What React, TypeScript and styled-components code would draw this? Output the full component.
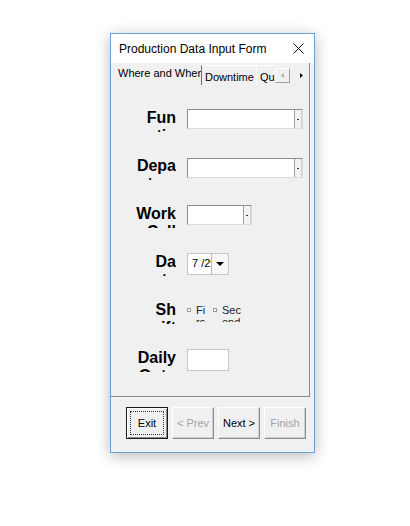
import React from "react";
import styled, { createGlobalStyle } from "styled-components";

const GlobalStyle = createGlobalStyle`
  html, body {
    margin: 0;
    padding: 0;
    background: #ffffff;
  }
  body {
    font-family: "Liberation Sans", Arial, sans-serif;
  }
`;

// Страница: окно формы сдвинуто как на скриншоте
const Screen = styled.div`
  width: 410px;
  height: 526px;
  padding: 33px 0 0 110px;
  box-sizing: border-box;
`;

const Window = styled.div`
  width: 205px;
  height: 420px;
  box-sizing: border-box;
  border: 1px solid #6f9fd2;
  background: #f0f0f0;
  box-shadow: 0 3px 14px rgba(0, 0, 0, 0.28);
  display: flex;
  flex-direction: column;
`;

const TitleBar = styled.div`
  height: 29px;
  flex: none;
  background: #ffffff;
  display: flex;
  align-items: center;
  justify-content: space-between;
  padding: 0 10px 0 8px;
  font-size: 12px;
  color: #000;
`;

const CloseIcon = () => (
  <svg width="11" height="11" viewBox="0 0 11 11">
    <path d="M0.5 0.5 L10.5 10.5 M10.5 0.5 L0.5 10.5" stroke="#111" strokeWidth="1" fill="none" />
  </svg>
);

const Body = styled.div`
  flex: 1;
  display: flex;
  flex-direction: column;
  padding-right: 4px;
`;

// MultiPage с вкладками
const MultiPage = styled.div`
  height: 334px;
  display: flex;
  flex-direction: column;
  border-right: 1px solid #8a8a8a;
  border-bottom: 1px solid #8a8a8a;
  box-sizing: border-box;
`;

const TabStrip = styled.div`
  height: 22px;
  flex: none;
  display: flex;
  align-items: flex-start;
`;

const Tabs = styled.div`
  width: 164px;
  height: 22px;
  display: flex;
  overflow: hidden;
  flex: none;
`;

const Tab = styled.div<{ $active?: boolean; $width: number }>`
  flex: none;
  width: ${({ $width }) => $width}px;
  height: ${({ $active }) => ($active ? 22 : 20)}px;
  margin-top: ${({ $active }) => ($active ? 0 : 2)}px;
  box-sizing: border-box;
  padding: ${({ $active }) => ($active ? "2px 0 0 6px" : "4px 0 0 3px")};
  font-size: 11px;
  line-height: 14px;
  white-space: nowrap;
  overflow: ${({ $active }) => ($active ? "visible" : "hidden")};
  position: relative;
  z-index: ${({ $active }) => ($active ? 0 : 1)};
  background: #f0f0f0;
  color: #000;
  border-left: 1px solid ${({ $active }) => ($active ? "transparent" : "#ffffff")};
  border-top: 1px solid ${({ $active }) => ($active ? "transparent" : "#ffffff")};
  &:first-child + & {
    border-left: 1px solid #6d6d6d;
  }
`;

const SpinButton = styled.div<{ $bordered?: boolean }>`
  width: 15px;
  height: 15px;
  margin-top: 5px;
  box-sizing: border-box;
  display: flex;
  align-items: center;
  justify-content: center;
  border: 1px solid;
  border-color: ${({ $bordered }) =>
    $bordered ? "#ffffff #a0a0a0 #a0a0a0 #ffffff" : "transparent"};
`;

const SpinGap = styled.div`
  width: 4px;
  flex: none;
`;

const Arrow = ({ dir, color }: { dir: "left" | "right"; color: string }) => (
  <svg width="3" height="5" viewBox="0 0 3 5">
    {dir === "left" ? (
      <path d="M3 0 L0 2.5 L3 5 Z" fill={color} />
    ) : (
      <path d="M0 0 L3 2.5 L0 5 Z" fill={color} />
    )}
  </svg>
);

const Panel = styled.div`
  flex: 1;
  padding-top: 24px;
  display: flex;
  flex-direction: column;
`;

const Row = styled.div`
  height: 48px;
  flex: none;
  display: flex;
  align-items: flex-start;
`;

const LabelCell = styled.div`
  width: 65px;
  flex: none;
  display: flex;
  justify-content: flex-end;
`;

const Label = styled.div<{ $width: number }>`
  width: ${({ $width }) => $width}px;
  height: 23px;
  overflow: hidden;
  text-align: right;
  word-break: break-all;
  font-size: 16px;
  line-height: 18px;
  font-weight: bold;
  color: #000;
`;

const FieldCell = styled.div<{ $offset?: number }>`
  margin-left: 11px;
  margin-top: ${({ $offset }) => $offset ?? 0}px;
  display: flex;
  gap: 5px;
`;

const Combo = styled.div<{ $width: number }>`
  width: ${({ $width }) => $width}px;
  height: 20px;
  box-sizing: border-box;
  background: #ffffff;
  border: 1px solid;
  border-color: #8c8c8c #dcdcdc #dcdcdc #8c8c8c;
  display: flex;
  justify-content: flex-end;
`;

const SmallDrop = styled.div`
  width: 8px;
  height: 100%;
  box-sizing: border-box;
  background: #f3f3f3;
  border-left: 1px solid #a0a0a0;
  border-right: 1px solid #cfcfcf;
  display: flex;
  align-items: center;
  justify-content: center;
`;

const Dot = styled.div`
  width: 2px;
  height: 1px;
  background: #333;
`;

const DateBox = styled.div`
  width: 42px;
  height: 22px;
  box-sizing: border-box;
  background: #ffffff;
  border: 1px solid #c6c6c6;
  display: flex;
`;

const DateText = styled.div`
  flex: 1;
  padding: 3px 0 0 4px;
  font-size: 11px;
  line-height: 13px;
  overflow: hidden;
  white-space: nowrap;
`;

const DateDrop = styled.div`
  width: 17px;
  flex: none;
  box-sizing: border-box;
  border-left: 1px solid #b8b8b8;
  background: #f7f7f7;
  display: flex;
  align-items: center;
  justify-content: center;
`;

const Option = styled.div`
  display: flex;
  align-items: flex-start;
  gap: 5px;
`;

const OptionMark = styled.div`
  width: 4px;
  height: 4px;
  margin-top: 4px;
  box-sizing: border-box;
  border: 1px solid #9a9a9a;
  background: #fff;
  flex: none;
`;

const OptionText = styled.div<{ $width: number }>`
  width: ${({ $width }) => $width}px;
  height: 18px;
  overflow: hidden;
  word-break: break-all;
  font-size: 11px;
  line-height: 12px;
  color: #222;
`;

const TextBox = styled.div`
  width: 42px;
  height: 22px;
  box-sizing: border-box;
  background: #ffffff;
  border: 1px solid #c8c8c8;
`;

const ButtonBar = styled.div`
  display: flex;
  gap: 4px;
  padding: 10px 0 0 15px;
`;

const Button = styled.div<{ $disabled?: boolean; $default?: boolean }>`
  width: 42px;
  height: 32px;
  box-sizing: border-box;
  display: flex;
  align-items: center;
  justify-content: center;
  font-size: 11px;
  color: ${({ $disabled }) => ($disabled ? "#a3a3a3" : "#000")};
  background: #f0f0f0;
  border: 1px solid;
  border-color: ${({ $default }) =>
    $default ? "#1a1a1a" : "#ffffff #8c8c8c #8c8c8c #ffffff"};
  box-shadow: ${({ $default }) =>
    $default
      ? "inset 1px 1px #ffffff, inset -1px -1px #8c8c8c"
      : "inset -1px -1px #d0d0d0"};
  position: relative;
`;

const FocusRing = styled.div`
  position: absolute;
  inset: 3px;
  border: 1px dotted #333;
`;

const fields = [
  { label: "Function", width: 34 },
  { label: "Department", width: 42 },
];

export default function App() {
  return (
    <>
      <GlobalStyle />
      <Screen>
        <Window>
          <TitleBar>
            <span>Production Data Input Form</span>
            <CloseIcon />
          </TitleBar>
          <Body>
            <MultiPage>
              <TabStrip>
                <Tabs>
                  <Tab $active $width={90}>Where and When</Tab>
                  <Tab $width={55}>Downtime</Tab>
                  <Tab $width={30}>Quality</Tab>
                </Tabs>
                <SpinButton $bordered>
                  <Arrow dir="left" color="#b0b0b0" />
                </SpinButton>
                <SpinGap />
                <SpinButton>
                  <Arrow dir="right" color="#000" />
                </SpinButton>
              </TabStrip>
              <Panel>
                {fields.map((f, i) => (
                  <Row key={f.label}>
                    <LabelCell>
                      <Label $width={f.width}>{f.label}</Label>
                    </LabelCell>
                    <FieldCell $offset={i}>
                      <Combo $width={116}>
                        <SmallDrop>
                          <Dot />
                        </SmallDrop>
                      </Combo>
                    </FieldCell>
                  </Row>
                ))}
                <Row>
                  <LabelCell>
                    <Label $width={42}>Work Cell(s)</Label>
                  </LabelCell>
                  <FieldCell>
                    <Combo $width={65}>
                      <SmallDrop>
                        <Dot />
                      </SmallDrop>
                    </Combo>
                  </FieldCell>
                </Row>
                <Row>
                  <LabelCell>
                    <Label $width={23}>Date</Label>
                  </LabelCell>
                  <FieldCell>
                    <DateBox>
                      <DateText>7 /29/2024</DateText>
                      <DateDrop>
                        <svg width="8" height="4" viewBox="0 0 8 4">
                          <path d="M0 0 L8 0 L4 4 Z" fill="#000" />
                        </svg>
                      </DateDrop>
                    </DateBox>
                  </FieldCell>
                </Row>
                <Row>
                  <LabelCell>
                    <Label $width={23}>Shift</Label>
                  </LabelCell>
                  <FieldCell $offset={3}>
                    <Option>
                      <OptionMark />
                      <OptionText $width={12}>First</OptionText>
                    </Option>
                    <Option>
                      <OptionMark />
                      <OptionText $width={20}>Second</OptionText>
                    </Option>
                  </FieldCell>
                </Row>
                <Row>
                  <LabelCell>
                    <Label $width={42}>Daily Output</Label>
                  </LabelCell>
                  <FieldCell>
                    <TextBox />
                  </FieldCell>
                </Row>
              </Panel>
            </MultiPage>
            <ButtonBar>
              <Button $default>
                <FocusRing />
                Exit
              </Button>
              <Button $disabled>&lt; Prev</Button>
              <Button>Next &gt;</Button>
              <Button $disabled>Finish</Button>
            </ButtonBar>
          </Body>
        </Window>
      </Screen>
    </>
  );
}
